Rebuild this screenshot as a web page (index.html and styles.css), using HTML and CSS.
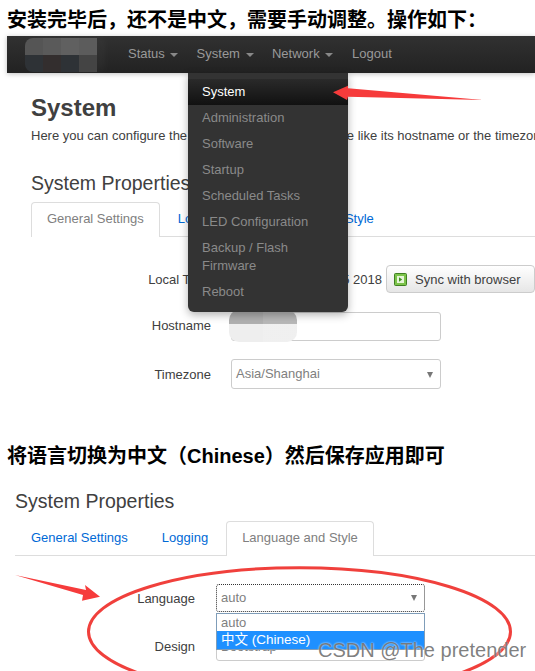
FILE: index.html
```html
<!DOCTYPE html>
<html lang="zh">
<head>
    <meta charset="UTF-8">
    <meta name="viewport" content="width=device-width, initial-scale=1.0">
    <title>System Properties</title>
    <link rel="stylesheet" href="styles.css">
</head>
<body>
    <h3 class="note note-first">安装完毕后，还不是中文，需要手动调整。操作如下：</h3>

    <div class="shot shot-top">
        <nav class="navbar">
            <div class="brand"><span></span><span></span><span></span><span></span></div>
            <a class="nav-item nav-status">Status <i class="caret"></i></a>
            <a class="nav-item nav-system">System <i class="caret"></i></a>
            <a class="nav-item nav-network">Network <i class="caret"></i></a>
            <a class="nav-item">Logout</a>
        </nav>
        <ul class="menu">
            <li class="active">System</li>
            <li>Administration</li>
            <li>Software</li>
            <li>Startup</li>
            <li>Scheduled Tasks</li>
            <li>LED Configuration</li>
            <li>Backup / Flash Firmware</li>
            <li>Reboot</li>
        </ul>
        <div class="content">
            <h2 class="page-title">System</h2>
            <p class="page-desc">Here you can configure the basic aspects of your device like its hostname or the timezone.</p>
            <h3 class="section-title">System Properties</h3>
            <div class="tabs tabs-top">
                <a class="tab current">General Settings</a>
                <a class="tab">Logging</a>
                <a class="tab">Language and Style</a>
            </div>
            <div class="form">
                <div class="row row-time">
                    <label>Local Time</label>
                    <span class="time">Tue May 1 12:30:15 2018</span>
                    <button class="btn"><svg class="btn-icon" width="13" height="13" viewBox="0 0 13 13"><rect x="0.500" y="0.500" width="12" height="12" rx="1" fill="#7cc34a" stroke="#3f7f22"/><rect x="3" y="3" width="7" height="7" fill="#e6f5d8"/><path d="M5 4.200 8.200 6.500 5 8.800z" fill="#3f8f22"/></svg>Sync with browser</button>
                </div>
                <div class="row row-host">
                    <label>Hostname</label>
                    <div class="field"></div>
                    <div class="smudge"></div>
                </div>
                <div class="row row-zone">
                    <label>Timezone</label>
                    <div class="field select">Asia/Shanghai<i class="arrow"></i></div>
                </div>
            </div>
        </div>
        <svg class="pointer" width="160" height="40" viewBox="0 0 160 40">
            <path d="M1 21.300 L16 14.700 L16 17.300 L151 29 L16 25.700 L15 29z" fill="#f63b3b"/>
        </svg>
    </div>

    <h3 class="note note-second">将语言切换为中文（Chinese）然后保存应用即可</h3>

    <div class="shot shot-bottom">
        <h3 class="section-title">System Properties</h3>
        <div class="tabs tabs-bottom">
            <a class="tab">General Settings</a>
            <a class="tab">Logging</a>
            <a class="tab current">Language and Style</a>
        </div>
        <div class="form form-lang">
            <div class="row row-lang">
                <label>Language</label>
                <div class="field select focus">auto<i class="arrow"></i></div>
            </div>
            <div class="row row-design">
                <label>Design</label>
                <div class="field select">Bootstrap</div>
            </div>
            <ul class="options">
                <li>auto</li>
                <li class="picked">中文 (Chinese)</li>
            </ul>
        </div>
        <svg class="circle" width="535" height="198" viewBox="0 0 535 198">
            <path d="M15 102 L86 117 L85 112 L100 123.700 L82 127.700 L83 122z" fill="#f63b3b"/>
            <ellipse cx="299.500" cy="158.700" rx="211" ry="64" fill="none" stroke="#f0403c" stroke-width="3"/>
        </svg>
        <span class="watermark">CSDN @The pretender</span>
    </div>
</body>
</html>
```

FILE: styles.css
```css
body {
    margin: 0;
    width: 535px;
    height: 671px;
    overflow: hidden;
    background: #fff;
    color: #404040;
    font-family: "Liberation Sans", "Noto Sans CJK SC", sans-serif;
    font-size: 13px;
}

.note {
    margin: 0;
    padding-left: 7px;
    color: #000;
    font-size: 20px;
    font-weight: bold;
    white-space: nowrap;
}

.note-first {
    height: 36px;
    line-height: 40px;
}

.note-second {
    height: 36px;
    margin-top: 36px;
    line-height: 39px;
}

.shot {
    position: relative;
}

.shot-top {
    height: 365px;
    margin-left: 7px;
}

.navbar {
    display: flex;
    align-items: center;
    height: 37px;
    background: linear-gradient(#313131, #222);
    box-shadow: 0 1px 5px rgba(0, 0, 0, 0.25);
}

.brand {
    display: grid;
    grid-template-columns: repeat(4, 18px);
    width: 72px;
    height: 34px;
    margin: 0 31px 0 18px;
    flex-shrink: 0;
    border-radius: 8px 0 0 8px;
    overflow: hidden;
    box-shadow: 8px 0 8px rgba(255, 255, 255, 0.03);
}

.brand span:nth-child(1) { background: linear-gradient(#555 50%, #2e3236 50%); }
.brand span:nth-child(2) { background: linear-gradient(#5a5a5a 50%, #332e2e 50%); }
.brand span:nth-child(3) { background: linear-gradient(#606060 50%, #2e3236 50%); }
.brand span:nth-child(4) { background: linear-gradient(#5c5c5c 50%, #444 50%); }

.nav-item {
    margin-top: -2px;
    color: #999;
    white-space: nowrap;
}

.nav-status { width: 68.600px; }
.nav-system { width: 75.400px; }
.nav-network { width: 80px; }

.caret {
    display: inline-block;
    margin-left: 2px;
    vertical-align: middle;
    border-top: 4px solid #888;
    border-left: 4px solid transparent;
    border-right: 4px solid transparent;
}

.menu {
    position: absolute;
    top: 37px;
    left: 181px;
    z-index: 2;
    width: 160px;
    box-sizing: border-box;
    margin: 0;
    padding: 6px 0 7px;
    list-style: none;
    background: #333;
    border-radius: 0 0 6px 6px;
    box-shadow: 0 3px 8px rgba(0, 0, 0, 0.3);
    color: #8a8a8a;
    line-height: 18px;
}

.menu li {
    padding: 4px 14px;
}

.menu .active {
    background: linear-gradient(#2a2a2a, #111);
    color: #fff;
}

.content {
    padding: 20px 0 0 24px;
}

.page-title {
    margin: 0;
    height: 30px;
    color: #404040;
    font-size: 24px;
    line-height: 30px;
}

.page-desc {
    margin: 0;
    height: 25px;
    line-height: 25px;
    white-space: nowrap;
    overflow: hidden;
}

.section-title {
    margin: 0;
    color: #404040;
    font-size: 19.500px;
    font-weight: normal;
    line-height: 24px;
}

.content .section-title {
    margin-top: 23px;
}

.tabs {
    display: flex;
    gap: 2px;
    height: 35px;
    box-sizing: border-box;
    border-bottom: 1px solid #ddd;
    line-height: 32px;
}

.tabs-top {
    margin-top: 7px;
}

.tabs-bottom {
    margin-top: 8px;
}

.tab {
    height: 35px;
    box-sizing: border-box;
    padding: 0 15px;
    border: 1px solid transparent;
    border-bottom: 0;
    color: #0069d6;
    white-space: nowrap;
}

.tab.current {
    background: #fff;
    border-color: #ddd;
    border-radius: 4px 4px 0 0;
    color: #808080;
}

.form {
    padding-top: 28px;
}

.row {
    position: relative;
    display: flex;
    align-items: center;
}

.row label {
    flex-shrink: 0;
    width: 180px;
    color: #404040;
    text-align: right;
}

.row-time {
    height: 28px;
}

.time {
    width: 151px;
    margin-left: 20px;
    text-align: right;
    white-space: nowrap;
}

.btn {
    display: flex;
    align-items: center;
    flex-shrink: 0;
    width: 149px;
    height: 28px;
    box-sizing: border-box;
    margin-left: 4px;
    padding: 0 0 0 7px;
    background: linear-gradient(#fff, #e6e6e6);
    border: 1px solid #ccc;
    border-radius: 4px;
    color: #404040;
    font: inherit;
}

.btn-icon {
    margin-right: 8px;
}

.row-host {
    margin-top: 19px;
}

.row-host label {
    margin-top: -2px;
}

.row-zone {
    margin-top: 18px;
}

.field {
    position: relative;
    box-sizing: border-box;
    width: 210px;
    height: 29px;
    margin-left: 20px;
    padding-left: 4px;
    background: #fff;
    border: 1px solid #ccc;
    border-radius: 3px;
    color: #808080;
    line-height: 28px;
}

.field.select {
    height: 30px;
}

.arrow {
    position: absolute;
    top: 12px;
    right: 7px;
    border-top: 6px solid #777;
    border-left: 3px solid transparent;
    border-right: 3px solid transparent;
}

.smudge {
    position: absolute;
    top: -2px;
    left: 198px;
    width: 68px;
    height: 32px;
    border-radius: 10px;
    background: linear-gradient(90deg, rgba(255, 255, 255, 0) 50%, rgba(255, 255, 255, 0.1) 50%), linear-gradient(#b0b0b0 45%, #eee 45%);
}

.pointer {
    position: absolute;
    top: 35px;
    left: 325px;
    z-index: 3;
}

.shot-bottom {
    height: 198px;
    padding: 16px 0 0 15px;
    box-sizing: border-box;
    overflow: hidden;
}

.form-lang {
    position: relative;
}

.row-lang .field,
.row-design .field {
    width: 209px;
    height: 28px;
    margin-left: 21px;
    line-height: 26px;
}

.row-lang .arrow {
    top: 10px;
}

.field.focus {
    border: 1px dotted #333;
}

.row-design {
    margin-top: 21px;
}

.row-design label {
    margin-top: -2px;
}

.options {
    position: absolute;
    top: 57px;
    left: 201px;
    z-index: 1;
    width: 209px;
    box-sizing: border-box;
    margin: 0;
    padding: 0;
    list-style: none;
    background: #fff;
    border: 1px solid #7f9db9;
    color: #808080;
    line-height: 17px;
}

.options li {
    padding-left: 4px;
}

.options .picked {
    background: #1e90ff;
    color: #fff;
    font-size: 13.500px;
    line-height: 18px;
}

.circle {
    position: absolute;
    top: 0;
    left: 0;
    z-index: 2;
}

.watermark {
    position: absolute;
    top: 166px;
    left: 318px;
    z-index: 3;
    color: rgba(105, 105, 105, 0.85);
    font-size: 20px;
    line-height: 23px;
    white-space: nowrap;
    text-shadow: 0 0 2px #fff;
}
```
